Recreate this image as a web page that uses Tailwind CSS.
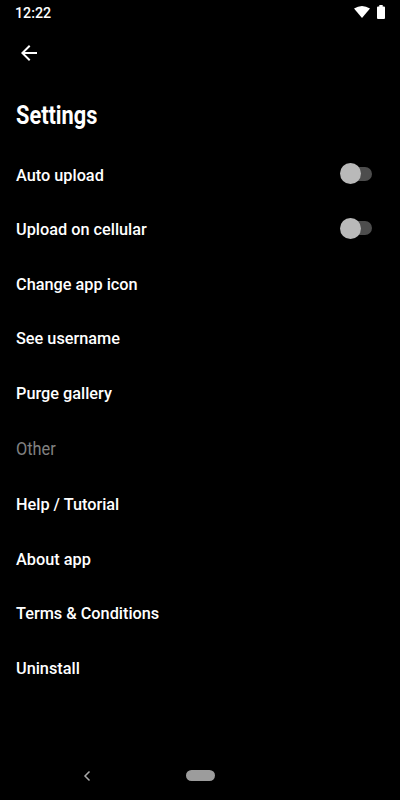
<!DOCTYPE html>
<html lang="en"><head><meta charset="utf-8"><title>Settings</title>
<script src="https://cdn.jsdelivr.net/npm/@tailwindcss/browser@4"></script></head>
<body class="bg-black">
<div class="w-[400px] h-[800px] bg-black text-white flex flex-col overflow-hidden font-['Roboto',sans-serif]">
<header class="h-[26px] pl-[15px] pr-[15px] flex items-center justify-between shrink-0">
<span class="text-[15px] leading-none font-medium origin-left scale-x-[.95]">12:22</span>
<div class="flex items-center gap-[7px] pb-[2px]">
<svg class="w-4 h-3" viewBox="0 0 16 12" fill="white"><path d="M0 2.500Q8-2.500 16 2.500L8 12Z"/></svg>
<svg class="w-2 h-[14px]" viewBox="0 0 8 14" fill="white"><path d="M2.300 0h3.400v1.500H7q1 0 1 1V13q0 1-1 1H1q-1 0-1-1V2.500q0-1 1-1h1.300z"/></svg>
</div></header>
<nav class="h-[54px] pl-[17px] flex items-center shrink-0"><svg class="w-6 h-6" viewBox="0 0 24 24" fill="white"><path d="M20 11H7.830l5.590-5.590L12 4l-8 8 8 8 1.410-1.410L7.830 13H20z"/></svg></nav>
<h1 class="h-[68px] pl-4 pt-1 flex items-center shrink-0 text-[25px] font-bold"><span class="origin-left scale-x-[.87]">Settings</span></h1>
<main class="px-4 text-[16.300px] font-medium flex flex-col">
<div class="h-[54.500px] flex items-center justify-between pr-3"><span class="pt-px">Auto upload</span><span class="w-8 h-[21px] mb-[3px] flex items-center relative"><span class="w-7 h-[14px] ml-1 bg-[#4d4d4d] rounded-full"></span><span class="absolute left-0 size-[21px] bg-[#b9b9b9] rounded-full"></span></span></div>
<div class="h-[54.500px] flex items-center justify-between pr-3"><span class="pt-px">Upload on cellular</span><span class="w-8 h-[21px] mb-[3px] flex items-center relative"><span class="w-7 h-[14px] ml-1 bg-[#4d4d4d] rounded-full"></span><span class="absolute left-0 size-[21px] bg-[#b9b9b9] rounded-full"></span></span></div>
<div class="h-[54.500px] flex items-center pt-px">Change app icon</div>
<div class="h-[54.500px] flex items-center pt-px">See username</div>
<div class="h-[54.500px] flex items-center pt-px">Purge gallery</div>
<h2 class="h-[57px] flex items-center text-[19px] font-normal text-[#808080]"><span class="origin-left scale-x-[.86]">Other</span></h2>
<div class="h-[54.500px] flex items-center pt-px">Help / Tutorial</div>
<div class="h-[54.500px] flex items-center pt-px">About app</div>
<div class="h-[54.500px] flex items-center pt-px">Terms &amp; Conditions</div>
<div class="h-[54.500px] flex items-center pt-px">Uninstall</div>
</main>
<footer class="mt-auto h-12 pb-px pl-[83px] flex items-center gap-[95px]"><svg class="w-2 h-3" viewBox="0 0 8 12" fill="none" stroke="#aaa" stroke-width="1.500"><path d="M6.500 1.500L2 6l4.500 4.500"/></svg><span class="w-[29px] h-[11px] rounded-full bg-[#9c9c9c]"></span></footer>
</div></body></html>
